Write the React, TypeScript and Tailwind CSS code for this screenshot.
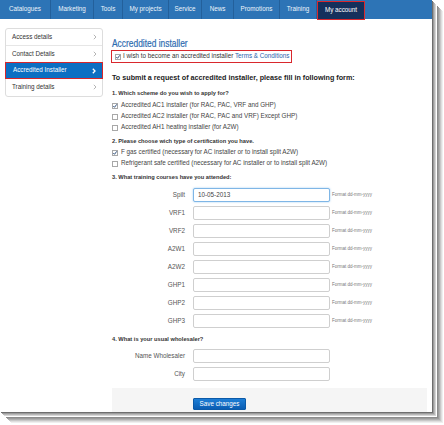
import React from "react";

const NAV: { label: string; w: string; active?: boolean }[] = [
  { label: "Catalogues", w: "w-[51px]" },
  { label: "Marketing", w: "w-[43px]" },
  { label: "Tools", w: "w-[29px]" },
  { label: "My projects", w: "w-[46px]" },
  { label: "Service", w: "w-[33px]" },
  { label: "News", w: "w-[32px]" },
  { label: "Promotions", w: "w-[46px]" },
  { label: "Training", w: "w-[37px]" },
  { label: "My account", w: "w-[48px]", active: true },
];

const SIDE = ["Access details", "Contact Details", "Accredited Installer", "Training details"];

const DATES: [string, string][] = [
  ["Spilt", "10-05-2013"],
  ["VRF1", ""],
  ["VRF2", ""],
  ["A2W1", ""],
  ["A2W2", ""],
  ["GHP1", ""],
  ["GHP2", ""],
  ["GHP3", ""],
];

function Box({ on }: { on?: boolean }) {
  return (
    <svg width="6" height="6" viewBox="0 0 6 6" className="shrink-0">
      <rect x="0.5" y="0.5" width="5" height="5" fill="#fff" stroke="#a8a8a8" strokeWidth="1" />
      {on && <path d="M1.3 3 L2.5 4.3 L4.8 1.3" fill="none" stroke="#35557f" strokeWidth="1" />}
    </svg>
  );
}

function Chevron({ white }: { white?: boolean }) {
  return (
    <svg width="4" height="6" viewBox="0 0 4 6" className="shrink-0">
      <path d="M0.8 0.8 L3 3 L0.8 5.2" fill="none" stroke={white ? "#fff" : "#b5b5b5"} strokeWidth={white ? 1.3 : 1} />
    </svg>
  );
}

function Field({ label, value, focus }: { label: string; value?: string; focus?: boolean }) {
  return (
    <div className="flex items-center h-[14px]">
      <span className="w-[73px] text-right text-[#555]">{label}</span>
      <div
        className={`ml-[8px] w-[137px] h-[14px] rounded-[2px] bg-white flex items-center px-[4px] text-[#444] ${
          focus ? "border border-[#7fb6e6] shadow-[0_0_2px_rgba(102,175,233,0.7)]" : "border border-[#cfcfcf]"
        }`}
      >
        {value}
      </div>
    </div>
  );
}

export default function App() {
  return (
    <div className="w-[444px] h-[425px] bg-white font-['Liberation_Sans',Arial,sans-serif] text-[6.3px] leading-none text-[#333]">
      <div className="w-[432px] h-[412px] overflow-hidden bg-white shadow-[1px_1px_0_#6e6e6e,2px_2px_0_#9c9c9c,3px_3px_0_#b8b8b8,4px_4px_0_#d6d6d6,5px_5px_0_#ffffff,6px_6px_0_#8c8c8c,7px_7px_0_#9c9c9c,8px_8px_0_#b0b0b0,9px_9px_0_#c8c8c8,10px_10px_0_#dedede,11px_11px_0_#efefef]">
        {/* top nav */}
        <div className="flex h-[19px] bg-[#2d74b6]">
          {NAV.map((n) =>
            n.active ? (
              <div
                key={n.label}
                className={`${n.w} h-[19px] mt-[1px] flex items-center justify-center bg-[#15305c] border border-[#d9282d] text-white`}
              >
                {n.label}
              </div>
            ) : (
              <div
                key={n.label}
                className={`${n.w} h-[19px] flex items-center justify-center border-r border-[#23609b] text-[#eef4fb]`}
              >
                {n.label}
              </div>
            )
          )}
        </div>

        <div className="flex">
          {/* sidebar */}
          <div className="ml-[5px] mt-[9px] w-[98px] self-start bg-white border border-[#dddddd] rounded-[3px]">
            {SIDE.map((s, i) =>
              i === 2 ? (
                <div
                  key={s}
                  className="-mx-px h-[17px] flex items-center justify-between pl-[7px] pr-[6px] bg-[#0c6fc2] border border-[#d6262b] text-white"
                >
                  <span>{s}</span>
                  <Chevron white />
                </div>
              ) : (
                <div
                  key={s}
                  className={`h-[16.5px] flex items-center justify-between pl-[6px] pr-[5px] text-[#333] ${
                    i === 0 ? "border-b border-[#e6e6e6]" : ""
                  }`}
                >
                  <span>{s}</span>
                  <Chevron />
                </div>
              )
            )}
          </div>

          {/* main */}
          <div className="ml-[9px] w-[315px] flex flex-col">
            <h1 className="mt-[18px] h-[12px] leading-[12px] text-[10.5px] font-normal text-[#2c6bb0]">
              <span className="inline-block origin-left scale-x-[0.8] [-webkit-text-stroke:0.2px_#2c6bb0]">
                Accreddited installer
              </span>
            </h1>

            <div className="mt-[1px] -ml-[1px] self-start h-[13px] flex items-center gap-[2px] pl-[3px] pr-[2px] border border-[#d9282d]">
              <Box on />
              <span>
                I wish to become an accredited installer <span className="text-[#2b64ad]">Terms &amp; Conditions</span>
              </span>
            </div>

            <h2 className="mt-[10px] h-[9px] leading-[9px] text-[7.2px] font-bold text-[#222]">
              To submit a request of accredited installer, please fill in following form:
            </h2>

            <h3 className="mt-[7px] h-[8px] leading-[8px] text-[5.7px] font-bold text-[#333]">
              1. Which scheme do you wish to apply for?
            </h3>
            <div className="mt-[3px] flex flex-col">
              {[
                ["Accredited AC1 installer (for RAC, PAC, VRF and GHP)", true],
                ["Accredited AC2 installer (for RAC, PAC and VRF) Except GHP)", false],
                ["Accredited AH1 heating installer (for A2W)", false],
              ].map(([t, on]) => (
                <div key={t as string} className="h-[11px] flex items-center gap-[3px] text-[#444]">
                  <Box on={on as boolean} />
                  <span>{t}</span>
                </div>
              ))}
            </div>

            <h3 className="mt-[4px] h-[8px] leading-[8px] text-[5.7px] font-bold text-[#333]">
              2. Please choose wich type of certification you have.
            </h3>
            <div className="mt-[2px] flex flex-col">
              {[
                ["F gas certified (necessary for AC installer or to install split A2W)", true],
                ["Refrigerant safe certified (necessary for AC installer or to install split A2W)", false],
              ].map(([t, on]) => (
                <div key={t as string} className="h-[11px] flex items-center gap-[3px] text-[#444]">
                  <Box on={on as boolean} />
                  <span>{t}</span>
                </div>
              ))}
            </div>

            <h3 className="mt-[4px] h-[8px] leading-[8px] text-[5.7px] font-bold text-[#333]">
              3. What training courses have you attended:
            </h3>
            <div className="mt-[7px] flex flex-col gap-[4px]">
              {DATES.map(([l, v], i) => (
                <div key={l} className="flex items-center">
                  <Field label={l} value={v} focus={i === 0} />
                  <span className="ml-[2px] text-[4.5px] text-[#777]">Format dd-mm-yyyy</span>
                </div>
              ))}
            </div>

            <h3 className="mt-[7px] h-[8px] leading-[8px] text-[5.7px] font-bold text-[#333]">
              4. What is your usual wholesaler?
            </h3>
            <div className="mt-[6px] flex flex-col gap-[4px]">
              <Field label="Name Wholesaler" />
              <Field label="City" />
            </div>

            <div className="mt-[7px] h-[30px] bg-[#f5f5f5] pt-[10px] pl-[81px]">
              <button className="w-[53px] h-[12px] rounded-[1px] bg-gradient-to-b from-[#1d7ed6] to-[#0a5db3] border border-[#0b5aa8] text-white text-[6.3px] leading-none">
                Save changes
              </button>
            </div>
          </div>
        </div>
      </div>
    </div>
  );
}
